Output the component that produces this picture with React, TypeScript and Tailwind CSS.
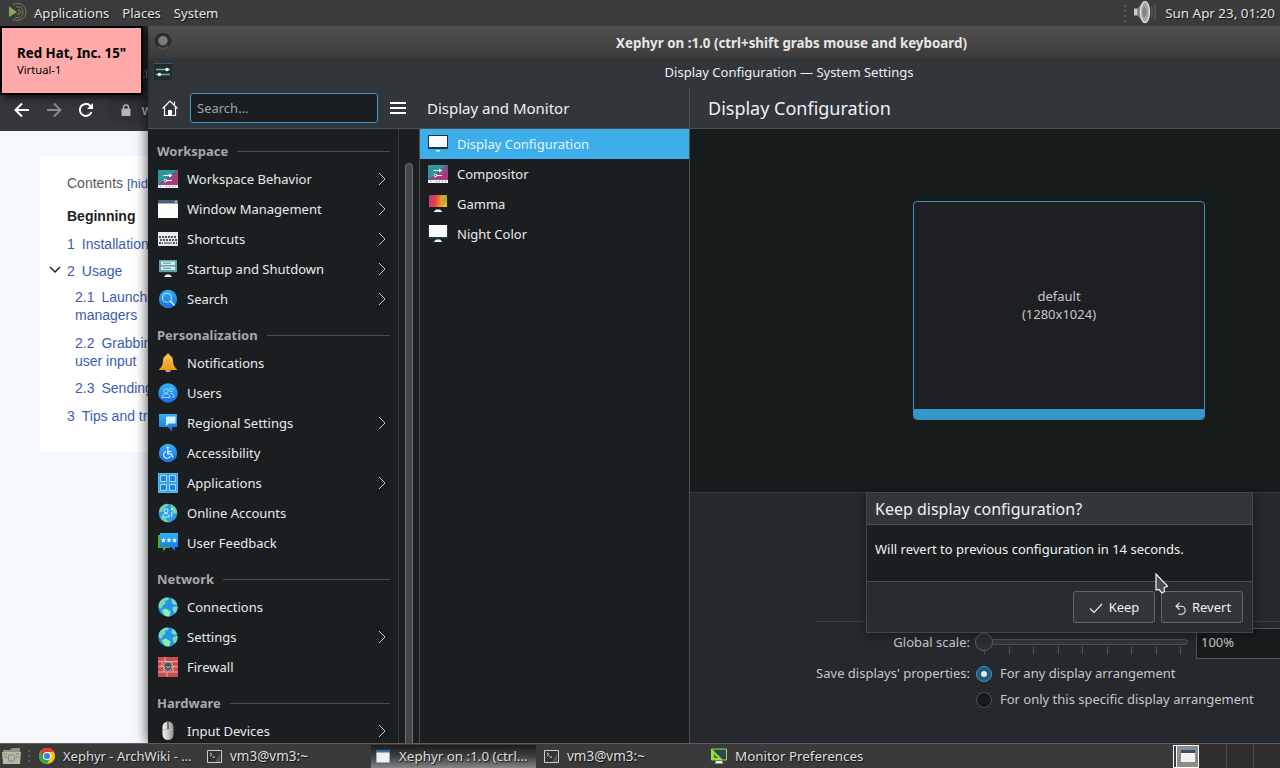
import React from "react";

type NavItem = { label: string; icon: string; arrow?: boolean };

const sections: { title: string; items: NavItem[] }[] = [
  {
    title: "Workspace",
    items: [
      { label: "Workspace Behavior", icon: "behavior", arrow: true },
      { label: "Window Management", icon: "window", arrow: true },
      { label: "Shortcuts", icon: "keyboard", arrow: true },
      { label: "Startup and Shutdown", icon: "startup", arrow: true },
      { label: "Search", icon: "search", arrow: true },
    ],
  },
  {
    title: "Personalization",
    items: [
      { label: "Notifications", icon: "bell" },
      { label: "Users", icon: "users" },
      { label: "Regional Settings", icon: "regional", arrow: true },
      { label: "Accessibility", icon: "accessibility" },
      { label: "Applications", icon: "apps", arrow: true },
      { label: "Online Accounts", icon: "accounts" },
      { label: "User Feedback", icon: "feedback" },
    ],
  },
  {
    title: "Network",
    items: [
      { label: "Connections", icon: "globe" },
      { label: "Settings", icon: "globe", arrow: true },
      { label: "Firewall", icon: "firewall" },
    ],
  },
  {
    title: "Hardware",
    items: [{ label: "Input Devices", icon: "mouse", arrow: true }],
  },
];

const modules: NavItem[] = [
  { label: "Display Configuration", icon: "display" },
  { label: "Compositor", icon: "behavior" },
  { label: "Gamma", icon: "gamma" },
  { label: "Night Color", icon: "night" },
];

function Gradients() {
  return (
    <svg width="0" height="0" className="absolute">
      <defs>
        <linearGradient id="blue" x1="0" y1="0" x2="0" y2="1">
          <stop offset="0" stopColor="#2fb2f2" />
          <stop offset="1" stopColor="#1b6fe0" />
        </linearGradient>
        <linearGradient id="bell" x1="0" y1="0" x2="0" y2="1">
          <stop offset="0" stopColor="#fbc860" />
          <stop offset="1" stopColor="#ee9414" />
        </linearGradient>
        <linearGradient id="gammaX" x1="0" y1="0" x2="1" y2="0">
          <stop offset="0" stopColor="#e0218a" />
          <stop offset="0.35" stopColor="#ee4136" />
          <stop offset="0.7" stopColor="#f0a028" />
          <stop offset="1" stopColor="#7dc032" />
        </linearGradient>
        <linearGradient id="gammaY" x1="0" y1="0" x2="1" y2="1">
          <stop offset="0" stopColor="#7b3fa0" stopOpacity="0.7" />
          <stop offset="0.5" stopColor="#e06030" stopOpacity="0" />
          <stop offset="1" stopColor="#f6e31a" />
        </linearGradient>
        <linearGradient id="metal" x1="0" y1="0" x2="1" y2="0">
          <stop offset="0" stopColor="#f2f2f2" />
          <stop offset="0.5" stopColor="#c9c9c9" />
          <stop offset="1" stopColor="#8d8d8d" />
        </linearGradient>
        <linearGradient id="cone" x1="0" y1="0" x2="1" y2="0">
          <stop offset="0" stopColor="#6d6d6d" />
          <stop offset="1" stopColor="#cfcfcf" />
        </linearGradient>
      </defs>
    </svg>
  );
}

function Icon({ name }: { name: string }) {
  return (
    <svg width="20" height="20" viewBox="0 0 20 20" className="-mt-0.5 shrink-0" fill="none">
      {name === "behavior" && (
        <>
          <path d="M0 1h20L0 16z" fill="#2c97a0" />
          <path d="M20 1v15H0z" fill="#a83a78" />
          <path d="M20 1v5L8 16H0z" fill="#7d5a8c" opacity="0.5" />
          <path d="M0 16h20v3H0z" fill="#eef0f1" />
          <path d="M2 17.500h1m5 0h1m2 0h1m2 0h1m2 0h1" stroke="#8c9296" />
          <path d="M5.500 6.500H12M8.500 11.500h5.500" stroke="#fff" strokeWidth="1.200" />
          <path d="m11 4.500 3.500 2-3.500 2z" fill="#fff" />
          <circle cx="7.500" cy="11.500" r="1.300" stroke="#fff" />
        </>
      )}
      {name === "window" && (
        <>
          <path d="M0 1h20v18H0z" fill="#fbfcfc" />
          <path d="M0 1h20v3.500H0z" fill="#46637c" />
          <circle cx="18" cy="2.600" r="0.900" fill="#fff" />
        </>
      )}
      {name === "keyboard" && (
        <>
          <path d="M0 3h20v14H0z" fill="#e9ebeb" />
          <path d="M1 8h18M2 11h17" stroke="#4d5356" strokeWidth="1.800" strokeDasharray="2 1" />
          <path d="M1 14h4m10 0h4" stroke="#4d5356" strokeWidth="1.800" strokeDasharray="2 1" />
          <path d="M6 14h8" stroke="#6c7275" strokeWidth="1.500" />
        </>
      )}
      {name === "startup" && (
        <>
          <path d="M1 1h18v12H1z" fill="#5fa3ae" />
          <path d="M1 13h18v1H1z" fill="#21353b" />
          <path d="M3 2.500h14v3.500H3zM3 7.500h14V11H3z" fill="#d8e9ec" />
          <path d="M5 4.200h8M5 9.300h8" stroke="#6a8b94" />
          <path d="M8 15.500h4l2 2.500H6z" fill="#eef1f2" />
        </>
      )}
      {name === "search" && (
        <>
          <circle cx="10" cy="10" r="9.200" fill="url(#blue)" />
          <circle cx="9" cy="8.800" r="4.500" stroke="#bfe4ff" strokeWidth="1.100" />
          <path d="m12.300 12 4.200 4.500" stroke="#fff" strokeWidth="1.200" />
        </>
      )}
      {name === "bell" && (
        <>
          <path d="M7 16.500h6a3 2.800 0 0 1-6 0z" fill="#b69c9c" />
          <path d="M10 .500c1 0 1.500.800 1.600 1.700 2.800 1 3.400 3.500 3.500 6.300.100 3.500 1.500 6 3.900 7.700v.8H1v-.8C3.400 14.500 4.800 12 4.900 8.500c.100-2.800.700-5.300 3.500-6.300C8.500 1.300 9 .500 10 .500z" fill="url(#bell)" />
        </>
      )}
      {name === "users" && (
        <>
          <circle cx="10" cy="10" r="9.700" fill="url(#blue)" />
          <g stroke="#a8dbff" strokeWidth="0.900">
            <circle cx="8" cy="8" r="2.200" />
            <circle cx="13" cy="6.800" r="1.800" />
            <path d="M4 14.500c.3-5 7.700-5 8 0zM12.500 10.500c2.300-.4 3.500 1 3.500 3.500h-2" />
          </g>
        </>
      )}
      {name === "regional" && (
        <>
          <path d="M1 1h18v13h-5v4.500L10 14H1z" fill="url(#blue)" />
          <path d="M8 3.500h9.500v7H11l-3 2.500z" fill="#d8efff" />
        </>
      )}
      {name === "accessibility" && (
        <>
          <circle cx="10" cy="10" r="9.200" fill="url(#blue)" />
          <circle cx="9.800" cy="4.800" r="1.100" fill="#fff" />
          <path d="M9.800 6.500v4.500h3.400l1.800 3.500M10 8.500h3.500" stroke="#fff" strokeWidth="1.200" />
          <path d="M8 8.500a3.500 3.500 0 1 0 4.300 4.800" stroke="#d8efff" strokeWidth="1.200" />
        </>
      )}
      {name === "apps" && (
        <>
          <path d="M0 0h20v20H0z" fill="#3ea2e6" />
          <g fill="#1b86dc" stroke="#a3dafc">
            <path d="M2.500 2.500h6v6h-6zM11.500 2.500h6v6h-6zM2.500 11.500h6v6h-6zM11.500 11.500h6v6h-6z" />
          </g>
          <path d="M.500.500h19v19H.500z" stroke="#5db8f2" />
        </>
      )}
      {name === "accounts" && (
        <>
          <circle cx="10" cy="10" r="9.300" fill="#2b9be4" />
          <path d="M1 9c.5-4.500 4-8 8-8.300L11 2 7 4.500 4 9zM13 1.500c3.500 1.500 6 4.500 6.200 8.500l-3 1-3-5zM2 14l5 1 4 4.200C7 19.600 3.500 17.500 2 14z" fill="#6fd4a3" />
          <g stroke="#dbf4ff" strokeWidth="1">
            <circle cx="8" cy="7.800" r="2" />
            <path d="M4.500 14c.2-4.500 6.800-4.500 7 0z" />
            <path d="M13.800 8.500V14" />
          </g>
          <circle cx="13.800" cy="6" r="0.900" fill="#fff" />
        </>
      )}
      {name === "feedback" && (
        <>
          <path d="M0 2h12v13H8l-3 3.500V15H0z" fill="#4fae2e" />
          <path d="M2 0h18v14h-3v4l-4-4H2z" fill="url(#blue)" />
          <path d="m5.500 4.500.8 1.700 1.700.2-1.300 1.200.4 1.900-1.600-1-1.600 1 .4-1.900L3 6.400l1.700-.2zM11 4.500l.8 1.700 1.700.2-1.300 1.200.4 1.900-1.600-1-1.600 1 .4-1.900-1.300-1.200 1.700-.2zM16.500 4.500l.8 1.700 1.700.2-1.300 1.200.4 1.900-1.600-1-1.600 1 .4-1.900L14 6.400l1.700-.2z" fill="#e6f6ff" />
        </>
      )}
      {name === "globe" && (
        <>
          <circle cx="10" cy="10" r="9.700" fill="#2496ea" />
          <path d="M.5 8C1.500 3.500 5 .8 9 .5L11 2 7 4.500l.5 2L4.500 9l-1 3-2.500-1.500zM14 1.500c2.500 1 4.500 3.500 5 6l-2.500.5-3-2zM15 10l4.600-1c.2 3-.8 5.500-3 7.500l-2-3.500z" fill="#79d8b8" />
          <path d="M4 13l4-1.500 4.500 3-1 4.800c-4 .6-6.500-1.500-7.500-6.300z" fill="#8af0a8" />
        </>
      )}
      {name === "firewall" && (
        <>
          <path d="M0 0h20v20H0z" fill="#c9504c" />
          <path d="M0 4.500h20M0 9.500h20M0 15h20M7 0v4.500M14 4.500v5M4 4.500v5M6 9.500V15M15 9.500V15M9 15v5" stroke="#eba9a3" />
          <path d="M6 6.500 10 5l4 1.500c.3 4-1 6.500-4 8-3-1.500-4.300-4-4-8z" fill="#4b4f52" stroke="#aaaeb0" />
          <path d="m8 9 2 2 2-2" stroke="#c6c9ca" />
        </>
      )}
      {name === "mouse" && (
        <>
          <rect x="4.500" y="0.500" width="11" height="18.500" rx="5.500" fill="url(#metal)" />
          <path d="M10 1v7" stroke="#555" strokeWidth="1.500" />
          <path d="M5 8.500h10" stroke="#bcbcbc" />
        </>
      )}
      {(name === "display" || name === "night") && (
        <>
          <path d="M0 1h20v14H0z" fill="#20343f" />
          <path d={name === "display" ? "M1 2h18v11H1z" : "M1 1h18v12H1z"} fill="#f8fcfd" />
          <path d={name === "display" ? "M8 16h4v1.500H8z" : "M8 15.500h4l2.500 2.500h-9z"} fill="#eef3f5" />
        </>
      )}
      {name === "gamma" && (
        <>
          <path d="M1 1h18v12H1z" fill="url(#gammaX)" />
          <path d="M1 1h18v12H1z" fill="url(#gammaY)" />
          <path d="M8 15.500h4l2.500 2.500h-9z" fill="#eef3f5" />
        </>
      )}
    </svg>
  );
}

function Chevron() {
  return (
    <svg width="8" height="14" viewBox="0 0 8 14" fill="none" className="-mt-0.5 mr-3">
      <path d="m1 1 6 6-6 6" stroke="#c2c4c5" />
    </svg>
  );
}

function SettingsSidebar() {
  return (
    <div className="flex w-[272px] shrink-0 border-r border-[#484c4f] bg-[#1b1e20]">
      <div className="w-[251px] border-r border-[#34383a] pt-0.5 pl-[9px]">
        {sections.map((section) => (
          <div key={section.title}>
            <div className="flex h-[34px] items-center gap-[9px] pt-2 pr-2 font-bold text-[#a6a8a9]">
              {section.title}
              <span className="-mt-0.5 h-px flex-1 bg-[#494d50]" />
            </div>
            {section.items.map((item) => (
              <div key={item.label} className="flex h-[30px] items-center pl-px text-[#e9eaeb]">
                <Icon name={item.icon} />
                <span className="ml-[9px] flex-1">{item.label}</span>
                {item.arrow && <Chevron />}
              </div>
            ))}
          </div>
        ))}
      </div>
      <div className="flex-1 pt-[34px] pl-1.5">
        <div className="h-[620px] w-2 rounded-t-full border border-[#6c7072] bg-[#43474a]" />
      </div>
    </div>
  );
}

function ModuleList() {
  return (
    <div className="w-[270px] shrink-0 border-r border-[#4c5053] bg-[#1b1e20]">
      {modules.map((item, i) => (
        <div
          key={item.label}
          className={`flex h-[30px] items-center gap-[9px] pt-0.5 pl-2 ${i === 0 ? "bg-[#3daee9] text-[#e3f5fd]" : "text-[#e9eaeb]"}`}
        >
          <Icon name={item.icon} />
          {item.label}
        </div>
      ))}
    </div>
  );
}

function DisplayPage() {
  return (
    <div className="flex flex-1 flex-col bg-[#25282d] text-[#c5c7c8]">
      <div className="flex h-[364px] border-b border-[#34383b] bg-[#161b1b] pt-[72px] pl-[223px]">
        <div className="flex h-[219px] w-[292px] flex-col rounded-[4px] border border-[#3b8fb8] bg-[#1e1f23]">
          <div className="flex flex-1 flex-col items-center justify-center pb-0.5 text-center leading-[18px]">
            <span>default</span>
            <span>(1280x1024)</span>
          </div>
          <div className="h-2.5 rounded-b-[3px] bg-[#3596c8]" />
        </div>
      </div>
      <div className="mt-32 ml-[126px] h-px shrink-0 bg-[#3b3f43]" />
      <div className="flex h-[42px] shrink-0 items-center">
        <span className="w-[280px] text-right">Global scale:</span>
        <svg width="218" height="30" viewBox="0 0 218 30" fill="none" className="ml-[3px]">
          <rect x="10.500" y="11.500" width="204" height="5" rx="2.500" fill="#34383c" stroke="#4c5053" />
          <path d="M11.500 18v8M36.500 18v8M60.500 18v8M85.500 18v8M109.500 18v8M134.500 18v8M158.500 18v8M183.500 18v8M207.500 18v8" stroke="#505457" />
          <circle cx="11" cy="14" r="8.500" fill="#2a2e31" stroke="#606467" />
        </svg>
        <div className="-mr-2 ml-[5px] flex h-[31px] flex-1 items-center border border-[#505457] bg-[#171b1c] pl-1">100%</div>
      </div>
      <div className="flex h-5 items-center">
        <span className="w-[280px] text-right">Save displays' properties:</span>
        <span className="ml-1.5 flex size-4 items-center justify-center rounded-full border border-[#3a9cc9] bg-[#235a76]">
          <span className="size-1.5 rounded-full bg-[#dce8f5]" />
        </span>
        <span className="ml-2">For any display arrangement</span>
      </div>
      <div className="mt-1.5 flex h-5 items-center">
        <span className="ml-[286px] size-4 rounded-full border border-[#4d5154] bg-[#17191b]" />
        <span className="ml-2 whitespace-nowrap">For only this specific display arrangement</span>
      </div>
    </div>
  );
}

function KeepDialog() {
  return (
    <div className="absolute top-[466px] left-[718px] flex h-[141px] w-[387px] flex-col border border-[#42474b] bg-[#292c2f] text-[#eff0f1] shadow-[0_2px_10px_rgba(0,0,0,0.4)]">
      <div className="flex h-[32px] items-center border-b border-[#4c5053] bg-[#31363b] pl-2 text-[16px]">
        Keep display configuration?
      </div>
      <div className="flex h-[57px] items-center border-b border-[#4c5053] bg-[#1b1e20] pb-1.5 pl-2">
        Will revert to previous configuration in 14 seconds.
      </div>
      <div className="flex flex-1 items-center justify-end gap-1.5 pr-[9px]">
        <button className="flex h-8 w-[82px] items-center justify-center gap-1.5 rounded-[3px] border border-[#63676a] bg-[#31363b] pt-0.5">
          <svg width="14" height="12" viewBox="0 0 14 12" fill="none">
            <path d="m1 6.500 4 4L13 2" stroke="#eff0f1" strokeWidth="1.100" />
          </svg>
          Keep
        </button>
        <button className="flex h-8 w-[82px] items-center justify-center gap-1.5 rounded-[3px] border border-[#63676a] bg-[#31363b] pt-0.5 pl-0.5">
          <svg width="11" height="13" viewBox="0 0 11 13" fill="none">
            <path d="M4.500.800 1 4.200l3.500 3.300M1 4.200h5.200a4 4 0 0 1 0 8H3.500" stroke="#eff0f1" strokeWidth="1.100" />
          </svg>
          Revert
        </button>
      </div>
    </div>
  );
}

function XephyrWindow() {
  return (
    <div className="absolute top-0 left-[148px] flex h-[717px] w-[1132px] flex-col overflow-hidden text-[13px] shadow-[0_0_12px_rgba(0,0,0,0.75)]">
      <div className="flex h-8 shrink-0 items-center bg-linear-to-b from-[#515151] to-[#3b3b3b] font-bold text-[#e6e6e6]">
        <svg width="18" height="20" viewBox="0 0 18 20" fill="none" className="ml-1.5">
          <circle cx="9" cy="9" r="6.800" stroke="#2b2b2b" strokeWidth="3" />
          <circle cx="9" cy="8.500" r="4.500" fill="#7b7b7b" />
          <path d="M3.500 14a7.500 7.500 0 0 0 11 0" stroke="#666" />
        </svg>
        <span className="flex-1 pt-0.5 pl-[131px] text-center text-[13.350px]">Xephyr on :1.0 (ctrl+shift grabs mouse and keyboard)</span>
      </div>
      <div className="flex h-[30px] shrink-0 items-center bg-[#31363b] text-[#eff0f1]">
        <svg width="18" height="18" viewBox="0 0 18 18" fill="none" className="-mt-0.5 ml-1.5">
          <path d="M0 0h18v17H0z" fill="#232a2e" />
          <path d="M0 .500h18" stroke="#46515a" />
          <path d="M2 6.500h14M2 11.500h14" stroke="#58b8b0" strokeWidth="1.300" />
          <circle cx="13" cy="6.500" r="1.800" fill="#f2f6f6" />
          <circle cx="5.500" cy="11.500" r="1.800" fill="#f2f6f6" />
        </svg>
        <span className="flex-1 pl-[126px] text-center">Display Configuration — System Settings</span>
      </div>
      <div className="flex h-[41px] shrink-0 border-b border-[#4c5053] bg-[#31363b] text-[#eff0f1]">
        <div className="flex w-[271px] shrink-0 items-center pl-[14px]">
          <svg width="16" height="16" viewBox="0 0 16 16" fill="none">
            <path d="M.500 8.500 8 1l7.500 7.500M2.500 7v8.500h11V7M12.500 5V1.500" stroke="#fff" strokeWidth="1.200" />
            <path d="M6 10h4v6H6z" fill="#fff" />
          </svg>
          <div className="ml-3 flex h-[30px] w-[188px] items-center rounded-[3px] border border-[#3a9cd0] bg-[#1b1e20] pt-0.5 pl-1.5 text-[#a1a4a6]">
            Search...
          </div>
          <div className="ml-3 flex w-4 flex-col gap-[3px]">
            <span className="h-0.5 bg-white" />
            <span className="h-0.5 bg-white" />
            <span className="h-0.5 bg-white" />
          </div>
        </div>
        <div className="flex w-[271px] shrink-0 items-center border-r border-[#4c5053] pl-2 text-[15px]">
          Display and Monitor
        </div>
        <div className="flex items-center pt-px pl-[18px] text-[18px]">Display Configuration</div>
      </div>
      <div className="flex min-h-0 flex-1">
        <SettingsSidebar />
        <ModuleList />
        <DisplayPage />
      </div>
      <KeepDialog />
      <svg width="14" height="22" viewBox="0 0 14 22" className="absolute top-[547px] left-[1007px]">
        <path d="M1 1v16l3-.500 3 3.500 2.500-1.500-.500-3.500L12.500 13z" fill="#4b4f53" stroke="#f4f4f4" strokeWidth="1.200" />
      </svg>
    </div>
  );
}

function Browser() {
  return (
    <div className="absolute inset-0 bg-[#35363a] font-['Liberation_Sans',Arial,sans-serif] text-[14px]">
      <div className="flex h-[64px] items-center bg-[#2a2b2d] pt-8 pl-[139px] text-[12px] text-[#9a9a9a]">ki</div>
      <div className="flex h-[41px] items-center pb-px pl-[14px]">
        <svg width="16" height="16" viewBox="0 0 16 16" fill="none">
          <path d="M15 8H2m6-6.500L1.500 8 8 14.500" stroke="#fff" strokeWidth="2" />
        </svg>
        <svg width="16" height="16" viewBox="0 0 16 16" fill="none" className="ml-4">
          <path d="M1 8h13M8 1.500 14.500 8 8 14.500" stroke="#8b8c8f" strokeWidth="1.800" />
        </svg>
        <svg width="16" height="16" viewBox="0 0 16 16" fill="none" className="ml-4">
          <path d="M13.500 10a6 6 0 1 1-1.300-6.300L14 5.500" stroke="#fff" strokeWidth="2" />
          <path d="M15 1v6H9z" fill="#fff" />
        </svg>
        <div className="ml-[13px] flex h-7 w-12 items-center rounded-l-full bg-[#303135] pl-[14px] text-[#c4c5c8]">
          <svg width="10" height="12" viewBox="0 0 10 12" fill="none">
            <path d="M2.500 5V3.500a2.500 2.500 0 0 1 5 0V5" stroke="#b4b5ba" strokeWidth="1.300" />
            <rect x="0.500" y="4.500" width="9" height="7.500" rx="1" fill="#b4b5ba" />
          </svg>
          <span className="ml-[11px]">w</span>
        </div>
      </div>
      <div className="h-[612px] bg-[#f5f8fc] pt-[25px] pl-10">
        <div className="h-[296px] w-60 bg-white pt-[18px] pl-[27px] whitespace-nowrap text-[#3c5cb0]">
          <div className="leading-[18px] text-[#54595d]">
            Contents <span className="text-[13px] text-[#3c5cb0]">[hide]</span>
          </div>
          <div className="mt-[14px] leading-[18px] font-bold text-[#202122]">Beginning</div>
          <div className="mt-2.5 leading-[18px]">
            1<span className="ml-[7px]">Installation</span>
          </div>
          <div className="relative mt-[9px] leading-[18px]">
            <svg width="12" height="8" viewBox="0 0 12 8" fill="none" className="absolute top-1 -left-[18px]">
              <path d="m1 1 5 5 5-5" stroke="#202122" strokeWidth="1.500" />
            </svg>
            2<span className="ml-[7px]">Usage</span>
          </div>
          <div className="mt-2 pl-2 leading-[18px]">
            2.1<span className="ml-[7px]">Launching</span>
            <br />
            managers
          </div>
          <div className="mt-2.5 pl-2 leading-[18px]">
            2.2<span className="ml-[7px]">Grabbing</span>
            <br />
            user input
          </div>
          <div className="mt-[9px] pl-2 leading-[18px]">
            2.3<span className="ml-[7px]">Sending</span>
          </div>
          <div className="mt-2.5 leading-[18px]">
            3<span className="ml-[7px]">Tips and tricks</span>
          </div>
        </div>
      </div>
    </div>
  );
}

function TerminalIcon() {
  return (
    <svg width="15" height="13" viewBox="0 0 15 13" fill="none">
      <path d="M.500.500h14v12H.500z" fill="#333" stroke="#cfcfcf" />
      <path d="m3 3 2 1.500L3 6M5.500 7H8" stroke="#ddd" />
      <path d="M8 12 13 4v8z" fill="#555" />
    </svg>
  );
}

function TopPanel() {
  return (
    <div className="flex h-[26px] shrink-0 items-center bg-[#3c3b3b] pr-[5px] pl-2 text-[13.100px] text-[#e4e4e4] [text-shadow:1px_1px_1px_#111]">
      <svg width="20" height="20" viewBox="0 0 20 20" fill="none" className="-mt-0.5">
        <path d="M1 4.500 9 10l-8 5z" fill="#87a752" />
        <path d="M5 2.500C11-.500 18 3.500 18 10s-7 10-13 7.500" stroke="#6f8450" />
        <path d="M8 5c4-1 7 1.500 7 5s-3 6.500-8 5.500" stroke="#6f8450" />
        <path d="M10 8c2 0 3 1 2.500 2.500S10 12.500 9 12" stroke="#87a752" />
      </svg>
      <span className="ml-1.5 pt-0.5">Applications</span>
      <span className="ml-[13px] pt-0.5">Places</span>
      <span className="ml-[13px] flex-1 pt-0.5">System</span>
      <span className="flex flex-col gap-[3px]">
        <span className="size-0.5 bg-[#5c5c5c]" />
        <span className="size-0.5 bg-[#5c5c5c]" />
        <span className="size-0.5 bg-[#5c5c5c]" />
        <span className="size-0.5 bg-[#5c5c5c]" />
      </span>
      <svg width="24" height="24" viewBox="0 0 24 24" fill="none" className="-mt-0.5 mr-2 ml-[7px]">
        <path d="M1 8.500h4.500v7H1z" fill="#c8c8c8" />
        <path d="M4.500 8.500 11 1.500v21L4.500 15.500z" fill="url(#cone)" />
        <ellipse cx="12" cy="12" rx="4.500" ry="10.500" fill="#a5a5a5" stroke="#e4e4e4" strokeWidth="1.200" />
        <ellipse cx="11.500" cy="12" rx="2" ry="5" fill="#808080" />
        <path d="M19 6v12M22 4v16" stroke="#55555a" strokeWidth="1.500" />
      </svg>
      <span className="text-[13.400px]">Sun Apr 23, 01:20</span>
    </div>
  );
}

function Taskbar() {
  return (
    <div className="flex h-[25px] shrink-0 items-center border-t border-[#5e5e5e] bg-[#3b3a3a] text-[13.400px] text-[#dedede] [text-shadow:1px_1px_1px_#111]">
      <svg width="20" height="18" viewBox="0 0 20 18" fill="none" className="ml-0.5">
        <path d="M1 3h7l2-2h8v4H1z" fill="#8f9583" />
        <path d="M0 5h19l-1 12H1z" fill="#b5baa8" />
        <circle cx="9.500" cy="11" r="3.500" stroke="#7d8372" />
        <path d="M2 7h3M2 10h3M14 7h3M14 10h3" stroke="#7d8372" />
      </svg>
      <span className="ml-1.5 flex flex-col gap-[3px]">
        <span className="size-0.5 bg-[#5a5a5a]" />
        <span className="size-0.5 bg-[#5a5a5a]" />
        <span className="size-0.5 bg-[#5a5a5a]" />
      </span>
      <div className="flex w-[165px] items-center pl-[9px]">
        <svg width="16" height="16" viewBox="0 0 16 16">
          <circle cx="8" cy="8" r="8" fill="#f5c518" />
          <path d="M1.070 4A8 8 0 0 0 8 16l3-6-3-2z" fill="#2da94f" />
          <path d="M8 4h6.930A8 8 0 0 0 1.070 4L5 9z" fill="#e33b2e" />
          <circle cx="8" cy="8" r="3.900" fill="#fff" />
          <circle cx="8" cy="8" r="3.100" fill="#3b7ded" />
        </svg>
        <span className="ml-2 pt-px text-[13px] whitespace-nowrap">Xephyr - ArchWiki - ...</span>
      </div>
      <div className="flex w-[176px] items-center gap-2 pl-3">
        <TerminalIcon />
        <span className="pt-px text-[13.500px]">vm3@vm3:~</span>
      </div>
      <div className="flex h-[23px] w-[165px] items-center gap-[9px] bg-linear-to-b from-[#1c1c1c] via-[#414141] to-[#858585] pl-[5px]">
        <svg width="14" height="13" viewBox="0 0 14 13">
          <path d="M0 0h14v13H0z" fill="#3f6aa3" />
          <path d="M.500 2.500h13v10H.500z" fill="#f0f1ee" />
        </svg>
        <span className="pt-px whitespace-nowrap">Xephyr on :1.0 (ctrl...</span>
      </div>
      <div className="flex w-[168px] items-center gap-2 pl-2">
        <TerminalIcon />
        <span className="pt-px text-[13.500px]">vm3@vm3:~</span>
      </div>
      <div className="flex flex-1 items-center gap-[8px] pl-[7px]">
        <svg width="16" height="16" viewBox="0 0 16 16" fill="none">
          <path d="M.500 1h15v11H.500z" fill="#2c4a4c" stroke="#a9d45c" />
          <path d="M1 1v11h11z" fill="#8ee02e" />
          <path d="M3 6v4h4z" fill="#3d6a1c" />
          <path d="M5 13h6l1 2.500H4z" fill="#f0f0ea" />
        </svg>
        <span className="pt-px">Monitor Preferences</span>
      </div>
      <div className="flex h-full items-center">
        <div className="flex h-[23px] w-[26px] border border-white bg-[#3a3a3a] pl-0.5">
          <div className="flex flex-1 items-center justify-center border-l border-white bg-[#8b8b8b]">
            <svg width="14" height="12" viewBox="0 0 14 12">
              <path d="M0 0h14v12H0z" fill="#f2f2f2" />
              <path d="M0 0h14v3H0z" fill="#2f5378" />
            </svg>
          </div>
        </div>
        <div className="h-full w-7 border-r border-[#4c4a4a] bg-[#2f2d2d]" />
        <div className="h-full w-[27px] border-r border-[#4c4a4a] bg-[#2f2d2d]" />
        <div className="h-full w-[26px] bg-[#2f2d2d]" />
      </div>
    </div>
  );
}

export default function App() {
  return (
    <div className="flex h-[768px] w-[1280px] flex-col overflow-hidden bg-[#2a2b2d] font-['Noto_Sans',sans-serif]">
      <Gradients />
      <TopPanel />
      <div className="relative min-h-0 flex-1 overflow-hidden">
        <Browser />
        <XephyrWindow />
        <div className="absolute top-0 left-0 h-[69px] w-[143px] border-2 border-black bg-[#ffaaaa] pt-4 pl-[15px] text-black shadow-[3px_3px_6px_rgba(0,0,0,0.6)]">
          <div className="text-[13.300px] leading-[18px] font-bold whitespace-nowrap">Red Hat, Inc. 15"</div>
          <div className="text-[11.200px] leading-4">Virtual-1</div>
        </div>
      </div>
      <Taskbar />
    </div>
  );
}
